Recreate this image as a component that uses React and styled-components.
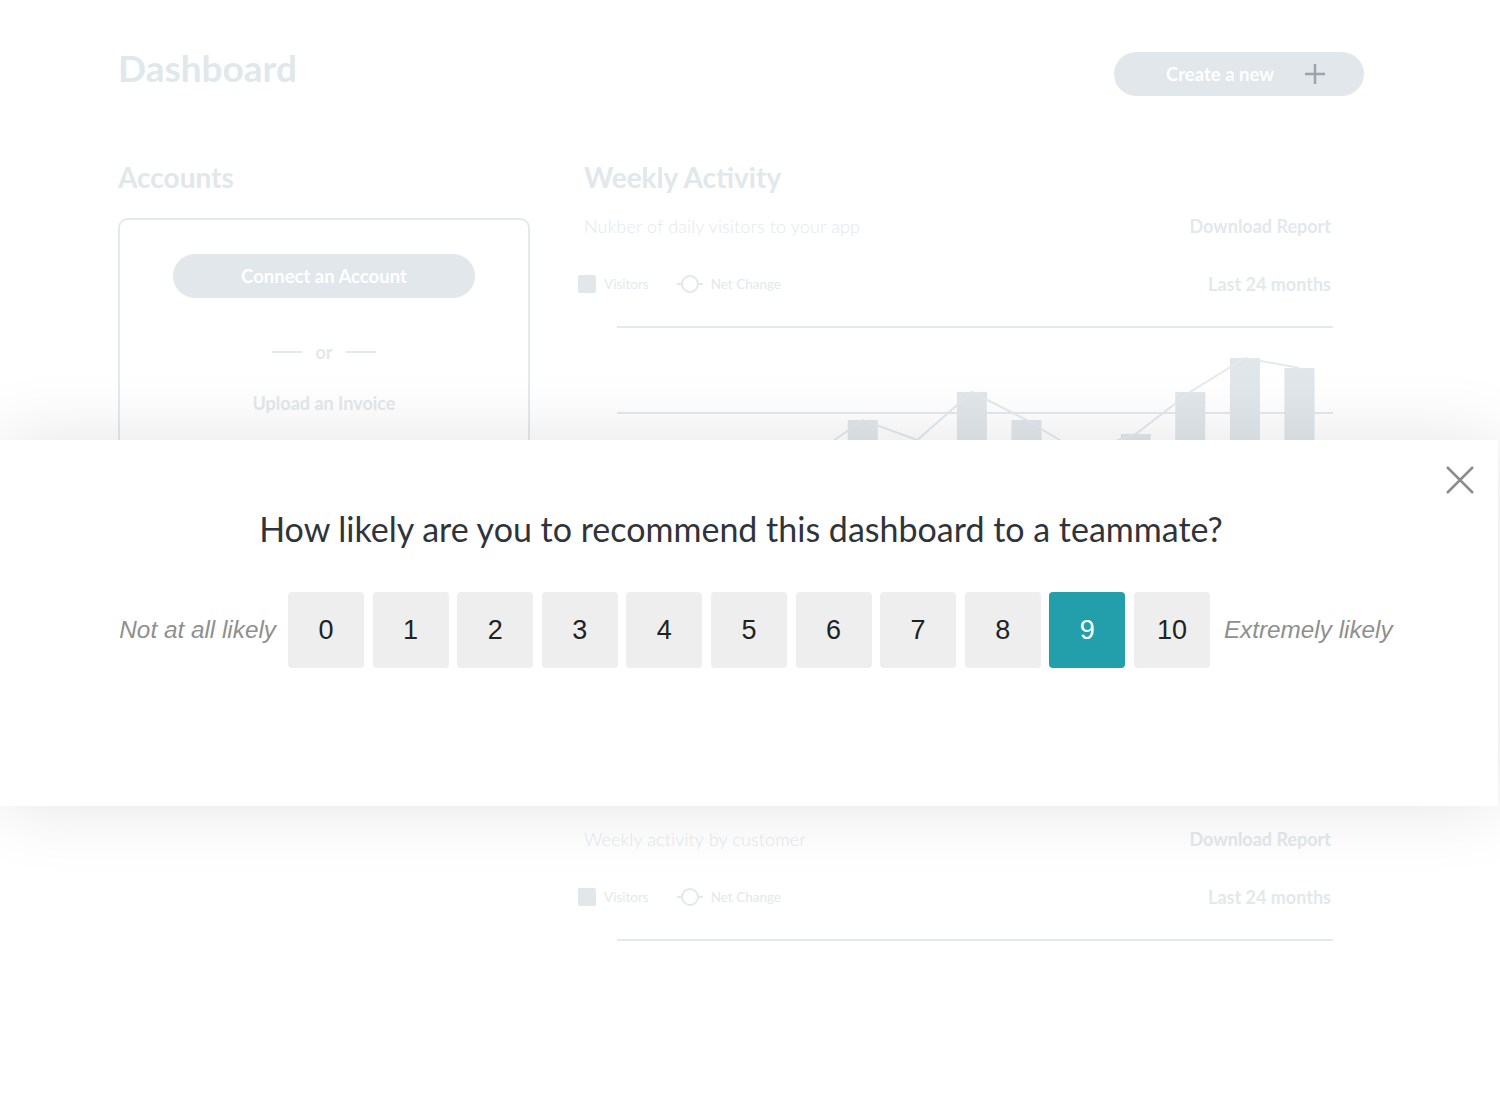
import React from "react";
import styled, { createGlobalStyle } from "styled-components";

const GlobalStyle = createGlobalStyle`
  body {
    margin: 0;
    background: #fff;
    font-family: Lato, "Open Sans", sans-serif;
  }
`;

const Page = styled.div`
  position: relative;
  width: 1500px;
  height: 1120px;
  overflow: hidden;
  background: #fff;
`;

const Dashboard = styled.div`
  display: flex;
  flex-direction: column;
  padding: 52px 0 0 118px;
`;

const Header = styled.div`
  display: flex;
  justify-content: space-between;
  align-items: flex-start;
  width: 1246px;
`;

const PageTitle = styled.h1`
  margin: 0;
  font-size: 37px;
  line-height: 32px;
  font-weight: 700;
  color: #e1e8ec;
`;

const PillButton = styled.button`
  display: flex;
  align-items: center;
  justify-content: ${(p) => (p.$centered ? "center" : "flex-start")};
  gap: 31px;
  width: ${(p) => p.$width}px;
  height: 44px;
  padding: ${(p) => (p.$centered ? "0" : "0 0 0 52px")};
  border: none;
  border-radius: 22px;
  background: #e1e7eb;
  color: #fff;
  font-family: Lato, sans-serif;
  font-size: 18.5px;
  font-weight: 700;
`;

const Columns = styled.div`
  display: grid;
  grid-template-columns: 412px 749px;
  column-gap: 54px;
  margin-top: 65px;
`;

const Column = styled.div`
  display: flex;
  flex-direction: column;
`;

const SectionTitle = styled.h2`
  margin: ${(p) => (p.$spaced ? "85px 0 0" : "0")};
  font-size: 28px;
  line-height: 32px;
  font-weight: 700;
  color: #e1e8ec;
`;

const Card = styled.div`
  display: flex;
  flex-direction: column;
  align-items: center;
  box-sizing: border-box;
  width: 412px;
  height: 350px;
  margin-top: 25px;
  padding-top: 34px;
  border: 2px solid #e4e9ed;
  border-radius: 10px;
`;

const OrRow = styled.div`
  display: flex;
  align-items: center;
  gap: 13px;
  margin-top: 44px;
  font-size: 18px;
  line-height: 20px;
  font-weight: 700;
  color: #e3e8ec;
`;

const OrLine = styled.span`
  width: 30px;
  height: 2px;
  background: #e4e9ed;
`;

const LinkText = styled.div`
  margin-top: ${(p) => p.$top || 0}px;
  font-size: 18px;
  line-height: 20px;
  font-weight: 700;
  color: #e3e8ec;
`;

const InfoRow = styled.div`
  display: flex;
  justify-content: space-between;
  align-items: center;
  margin-top: ${(p) => p.$top}px;
  margin-left: ${(p) => p.$shift || 0}px;
  width: ${(p) => 747 - (p.$shift || 0)}px;
`;

const Subtitle = styled.span`
  font-size: 18px;
  line-height: 20px;
  font-weight: 300;
  letter-spacing: 0.15px;
  color: #e4e9ee;
`;

const Legend = styled.div`
  display: flex;
  align-items: center;
  gap: 8px;
  font-size: 13.5px;
  line-height: 20px;
  font-weight: 400;
  color: #e3e8ec;
`;

const LegendSquare = styled.span`
  width: 18px;
  height: 18px;
  border-radius: 2px;
  background: #e1e7eb;
`;

const LegendGap = styled.span`
  width: 12px;
`;

const ChartBox = styled.div`
  margin: 32px 0 0 33px;
  width: 716px;
`;

const Modal = styled.div`
  position: absolute;
  top: 440px;
  left: 0;
  width: 1498px;
  height: 366px;
  box-sizing: border-box;
  display: flex;
  flex-direction: column;
  align-items: center;
  padding-top: 69px;
  background: #fff;
  box-shadow: 0 0 70px rgba(0, 0, 0, 0.11);
`;

const CloseButton = styled.button`
  position: absolute;
  top: 26px;
  right: 24px;
  padding: 0;
  border: none;
  background: none;
  line-height: 0;
`;

const Question = styled.h3`
  margin: 0 16px 0 0;
  font-family: Lato, sans-serif;
  font-size: 34px;
  line-height: 40px;
  font-weight: 400;
  color: #2f343a;
`;

const ScaleRow = styled.div`
  display: flex;
  align-items: center;
  margin-top: 43px;
  margin-left: 14px;
`;

const ScaleLabel = styled.span`
  font-family: "Liberation Sans", Arial, sans-serif;
  font-style: italic;
  font-size: 24.3px;
  color: #8f8f8f;
  margin: ${(p) => (p.$end ? "0 0 0 14px" : "0 12px 0 0")};
`;

const Scores = styled.div`
  display: flex;
  gap: 8.6px;
`;

const Score = styled.button`
  width: 76px;
  height: 76px;
  padding: 0;
  border: none;
  border-radius: 4px;
  background: ${(p) => (p.$active ? "#239eab" : "#eeeeee")};
  color: ${(p) => (p.$active ? "#fff" : "#222")};
  font-family: "Liberation Sans", Arial, sans-serif;
  font-size: 27px;
`;

const SLOT = 54.6;
const BARS = [220, 190, 240, 133, 94, 114, 66, 94, 127, 108, 66, 32, 42];

function NetChangeIcon() {
  return (
    <svg width="26" height="20" viewBox="0 0 26 20">
      <line x1="0" y1="10" x2="26" y2="10" stroke="#e3e8ec" strokeWidth="2" />
      <circle cx="13" cy="10" r="8" fill="#fff" stroke="#e3e8ec" strokeWidth="2" />
    </svg>
  );
}

function PlusIcon() {
  return (
    <svg width="20" height="20" viewBox="0 0 20 20">
      <path d="M10 0v20M0 10h20" stroke="#9da3aa" strokeWidth="2.5" />
    </svg>
  );
}

function CloseIcon() {
  return (
    <svg width="28" height="28" viewBox="0 0 28 28">
      <path d="M1 1L27 27M27 1L1 27" stroke="#8c8c8c" strokeWidth="2.5" />
    </svg>
  );
}

function Chart({ data }) {
  const grid = data ? [1, 87, 173, 259, 345] : [1];
  const points = (data || []).map((top, i) => `${(i + 0.5) * SLOT},${top}`).join(" ");
  return (
    <svg width="716" height={data ? 360 : 20} viewBox={`0 0 716 ${data ? 360 : 20}`}>
      {grid.map((y) => (
        <line key={y} x1="0" x2="716" y1={y} y2={y} stroke="#e4e9ed" strokeWidth="2" />
      ))}
      {(data || []).map((top, i) => (
        <rect key={i} x={(i + 0.5) * SLOT - 15} y={top} width="30" height={344 - top} fill="#e0e6ea" />
      ))}
      {data && <polyline points={points} fill="none" stroke="#e4e9ed" strokeWidth="2" />}
    </svg>
  );
}

function ChartSection({ title, subtitle, data, spaced }) {
  return (
    <>
      <SectionTitle $spaced={spaced}>{title}</SectionTitle>
      <InfoRow $top={23}>
        <Subtitle>{subtitle}</Subtitle>
        <LinkText>Download Report</LinkText>
      </InfoRow>
      <InfoRow $top={38} $shift={-6}>
        <Legend>
          <LegendSquare />
          Visitors
          <LegendGap />
          <NetChangeIcon />
          Net Change
        </Legend>
        <LinkText>Last 24 months</LinkText>
      </InfoRow>
      <ChartBox>
        <Chart data={data} />
      </ChartBox>
    </>
  );
}

const App = () => {
  const scores = Array.from({ length: 11 }, (_, i) => i);
  return (
    <Page>
      <GlobalStyle />
      <Dashboard>
        <Header>
          <PageTitle>Dashboard</PageTitle>
          <PillButton $width={250}>
            Create a new
            <PlusIcon />
          </PillButton>
        </Header>
        <Columns>
          <Column>
            <SectionTitle>Accounts</SectionTitle>
            <Card>
              <PillButton $width={302} $centered>Connect an Account</PillButton>
              <OrRow>
                <OrLine />
                or
                <OrLine />
              </OrRow>
              <LinkText $top={31}>Upload an Invoice</LinkText>
            </Card>
          </Column>
          <Column>
            <ChartSection
              title="Weekly Activity"
              subtitle="Nukber of daily visitors to your app"
              data={BARS}
            />
            <ChartSection
              title="Weekly by Customer"
              subtitle="Weekly activity by customer"
              spaced
            />
          </Column>
        </Columns>
      </Dashboard>

      <Modal>
        <CloseButton>
          <CloseIcon />
        </CloseButton>
        <Question>How likely are you to recommend this dashboard to a teammate?</Question>
        <ScaleRow>
          <ScaleLabel>Not at all likely</ScaleLabel>
          <Scores>
            {scores.map((n) => (
              <Score key={n} $active={n === 9}>
                {n}
              </Score>
            ))}
          </Scores>
          <ScaleLabel $end>Extremely likely</ScaleLabel>
        </ScaleRow>
      </Modal>
    </Page>
  );
};

export default App;
